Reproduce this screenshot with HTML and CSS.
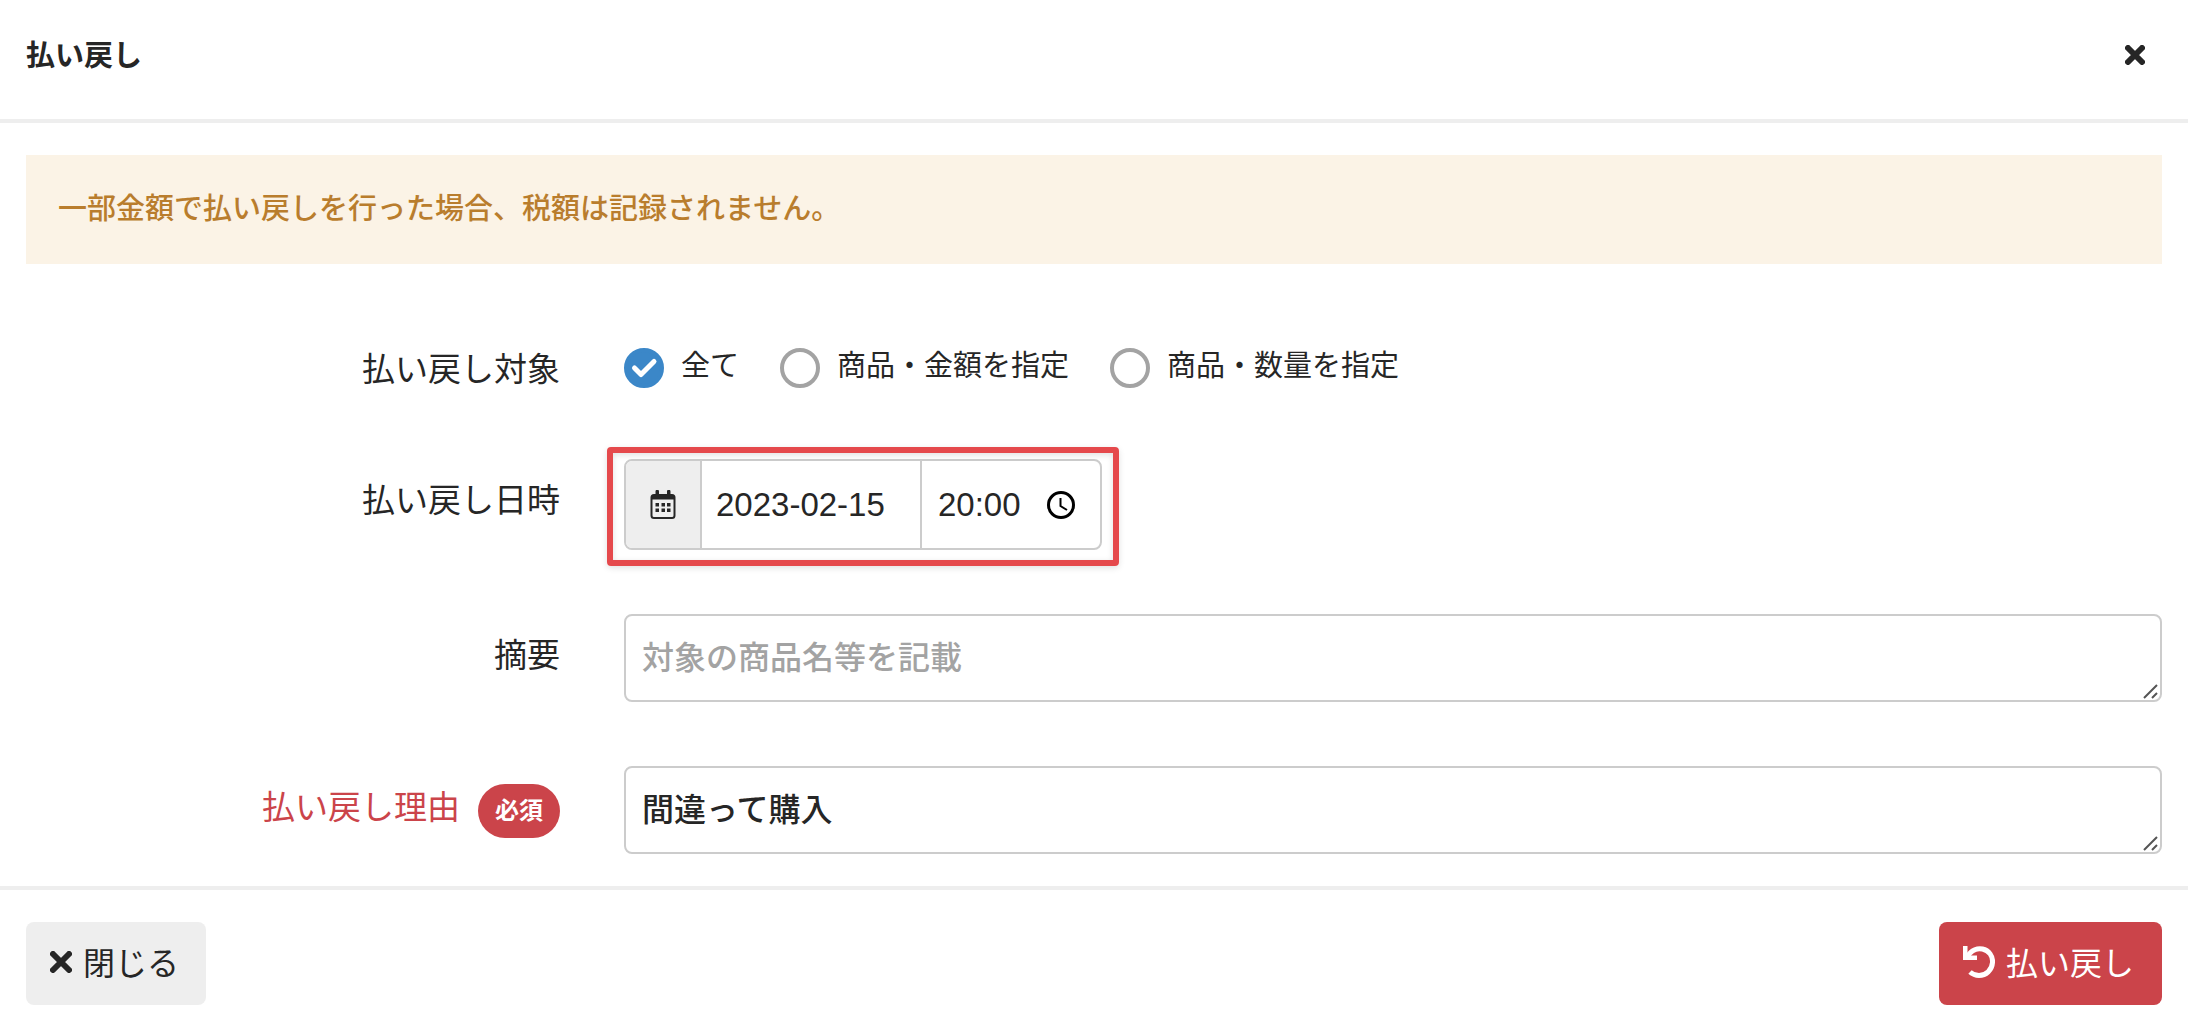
FILE: index.html
```
<!DOCTYPE html>
<html lang="ja">
<head>
  <meta charset="UTF-8" />
  <meta name="viewport" content="width=device-width, initial-scale=1.0"/>
  <title>払い戻し</title>
  <link rel="stylesheet" href="styles.css">
</head>
<body>
  <form class="modal" onsubmit="return false">
    <header class="modal-header">
      <h1>払い戻し</h1>
      <button type="button" class="close-icon" aria-label="閉じる">
        <svg width="20" height="20" viewBox="0 0 20 20"><path d="M3 3L17 17M17 3L3 17" /></svg>
      </button>
    </header>

    <main class="modal-body">
      <p class="alert">一部金額で払い戻しを行った場合、税額は記録されません。</p>

      <div class="form-row" role="radiogroup" aria-labelledby="target-label">
        <span class="form-label" id="target-label">払い戻し対象</span>
        <div class="radio-group">
          <label class="radio">
            <input type="radio" name="target" value="all" checked />
            <svg class="check" width="40" height="40" viewBox="0 0 40 40"><path d="M10.5 20L17 26.5L30 13.5" /></svg>
            <span>全て</span>
          </label>
          <label class="radio">
            <input type="radio" name="target" value="amount" />
            <svg class="check" width="40" height="40" viewBox="0 0 40 40"><path d="M10.5 20L17 26.5L30 13.5" /></svg>
            <span>商品・金額を指定</span>
          </label>
          <label class="radio">
            <input type="radio" name="target" value="quantity" />
            <svg class="check" width="40" height="40" viewBox="0 0 40 40"><path d="M10.5 20L17 26.5L30 13.5" /></svg>
            <span>商品・数量を指定</span>
          </label>
        </div>
      </div>

      <div class="form-row">
        <label class="form-label" for="date">払い戻し日時</label>
        <div class="datetime">
          <span class="addon">
            <svg width="26" height="30" viewBox="0 0 26 30">
              <path fill-rule="evenodd" d="M5.500 1.500a1.500 1.500 0 0 1 3.500 0V4h8V1.500a1.500 1.500 0 0 1 3.500 0V4H22a3.500 3.500 0 0 1 3.500 3.500v18A3.500 3.500 0 0 1 22 29H4A3.500 3.500 0 0 1 .5 25.500v-18A3.500 3.500 0 0 1 4 4h1.500zM2.500 9.500v16q0 1.500 1.500 1.500h18q1.500 0 1.500-1.500v-16z" />
              <path d="M5.500 13H9v3.500H5.500zm6 0H15v3.500h-3.500zm5.500 0h3.500v3.500H17zM5.500 18.500H9V22H5.500zm6 0H15V22h-3.500zm5.500 0h3.500V22H17z" />
            </svg>
          </span>
          <input type="text" id="date" class="date-input" value="2023-02-15" />
          <div class="time">
            <input type="text" class="time-input" value="20:00" aria-label="時刻" />
            <button type="button" class="clock" aria-label="時刻を選択">
              <svg width="28" height="28" viewBox="0 0 28 28">
                <circle cx="14" cy="14" r="12.500" />
                <path d="M13.500 7v8l6.500 4" />
              </svg>
            </button>
          </div>
        </div>
      </div>

      <div class="form-row">
        <label class="form-label" for="summary">摘要</label>
        <div class="field">
          <textarea id="summary" rows="1" placeholder="対象の商品名等を記載"></textarea>
          <svg class="grip" width="15" height="15" viewBox="0 0 15 15"><path d="M1 14L14 1M9 14L14 9" /></svg>
        </div>
      </div>

      <div class="form-row">
        <label class="form-label required" for="reason">払い戻し理由 <span class="badge">必須</span></label>
        <div class="field">
          <textarea id="reason" rows="1" required>間違って購入</textarea>
          <svg class="grip" width="15" height="15" viewBox="0 0 15 15"><path d="M1 14L14 1M9 14L14 9" /></svg>
        </div>
      </div>
    </main>

    <footer class="modal-footer">
      <button type="button" class="btn">
        <svg class="icon-cross" width="22" height="22" viewBox="0 0 22 22"><path d="M3 3L19 19M19 3L3 19" /></svg>
        <span>閉じる</span>
      </button>
      <button type="submit" class="btn btn-danger">
        <svg class="icon-undo" width="32" height="32" viewBox="0 0 32 32">
          <path class="arc" d="M4.500 10.500C8.500 3.500 15 2 19.500 3C26 4.500 30 10 29.500 16.500C29 24 23 29.500 16 29.500C12.500 29.500 9.500 28.300 7 26" />
          <path class="head" d="M0 0H4.500V9.500H14V14H0z" />
        </svg>
        <span>払い戻し</span>
      </button>
    </footer>
  </form>
</body>
</html>
```
FILE: styles.css
```
* {
  box-sizing: border-box;
}
body {
  margin: 0;
  background-color: #fff;
  color: #262626;
  font-family: "Liberation Sans", "Noto Sans CJK JP", sans-serif;
  font-size: 32px;
}
input, textarea, button {
  font: inherit;
  color: inherit;
  margin: 0;
}
button {
  border: none;
  cursor: pointer;
}
svg {
  display: block;
}
.modal {
  display: flex;
  flex-direction: column;
  min-height: 100vh;
}
.modal-header {
  display: flex;
  align-items: center;
  justify-content: space-between;
  padding: 35px 33px 42px 26px;
  border-bottom: 4px solid #eee;
}
.modal-header h1 {
  margin: 0;
  font-size: 29px;
  line-height: 42px;
}
.close-icon {
  padding: 9px 10px 11px;
  background: none;
}
.close-icon path, .icon-cross path {
  stroke: #262626;
  stroke-width: 6;
  stroke-linecap: round;
}
.modal-body {
  flex: 1;
  display: flex;
  flex-direction: column;
  gap: 64px;
  padding: 32px 26px;
}
.alert {
  margin: 0;
  padding: 32px;
  background-color: #fbf3e6;
  color: #b97d2d;
  font-size: 29px;
  font-weight: 500;
  line-height: 45px;
}
.form-row {
  display: grid;
  grid-template-columns: 25% 1fr;
  column-gap: 64px;
  align-items: start;
  min-height: 67px;
}
.form-label {
  padding-top: 17px;
  font-size: 33px;
  line-height: 49px;
  text-align: right;
}
.form-label.required {
  display: flex;
  justify-content: flex-end;
  gap: 18px;
  color: #cb444a;
}
.badge {
  padding: 0 17px;
  margin: 1px 0 -6px;
  border-radius: 27px;
  background-color: #cb444a;
  color: #fff;
  font-size: 24px;
  font-weight: bold;
  line-height: 54px;
}
.radio-group {
  display: flex;
  flex-wrap: wrap;
  gap: 41px;
  padding-top: 20px;
}
.radio {
  display: grid;
  grid-template-columns: 40px auto;
  column-gap: 17px;
  font-size: 29px;
  line-height: 36px;
  cursor: pointer;
}
.radio input {
  grid-area: 1 / 1;
  appearance: none;
  width: 40px;
  height: 40px;
  border: 4px solid #a3a3a3;
  border-radius: 50%;
}
.radio input:checked {
  border-color: #3b87c8;
  background-color: #3b87c8;
}
.radio .check {
  grid-area: 1 / 1;
  visibility: hidden;
  pointer-events: none;
}
.radio input:checked + .check {
  visibility: visible;
}
.check path {
  fill: none;
  stroke: #fff;
  stroke-width: 5;
  stroke-linecap: round;
  stroke-linejoin: round;
}
.datetime {
  position: relative;
  justify-self: start;
  display: flex;
  height: 91px;
  border: 2px solid #ccc;
  border-radius: 8px;
  font-size: 33px;
}
/* red frame round the date fields */
.datetime::after {
  content: "";
  position: absolute;
  inset: -14px -19px -18px;
  border: 6px solid #e5494c;
  border-radius: 4px;
  box-shadow: 0 2px 6px rgba(0,0,0,0.12), inset 0 2px 6px rgba(0,0,0,0.12);
  pointer-events: none;
}
.addon {
  display: flex;
  align-items: center;
  justify-content: center;
  width: 74px;
  border-radius: 6px 0 0 6px;
  background-color: #eee;
}
.addon path {
  fill: #262626;
}
.date-input {
  width: 222px;
  padding: 0 14px;
  border: solid #ccc;
  border-width: 0 2px;
  background: none;
}
.time {
  display: flex;
  align-items: center;
  width: 178px;
  padding-left: 16px;
}
.time-input {
  width: 93px;
  height: 87px;
  padding: 0;
  border: none;
  background: none;
}
.clock {
  margin-left: 16px;
  padding: 0;
  background: none;
}
.clock svg {
  fill: none;
  stroke: #000;
  stroke-width: 3;
}
.clock path {
  stroke-width: 2;
}
.field {
  position: relative;
}
textarea {
  display: block;
  width: 100%;
  height: 88px;
  padding: 16px;
  border: 2px solid #ccc;
  border-radius: 8px;
  font-weight: 500;
  line-height: 52px;
  resize: vertical;
  overflow: hidden;
}
textarea::placeholder {
  color: #a3a3a3;
}
textarea::-webkit-resizer {
  background: transparent;
}
.grip {
  position: absolute;
  right: 4px;
  bottom: 3px;
  pointer-events: none;
}
.grip path {
  stroke: #555;
  stroke-width: 2;
}
.modal-footer {
  display: flex;
  justify-content: space-between;
  padding: 32px 26px 27px;
  border-top: 4px solid #eee;
}
.btn {
  display: flex;
  align-items: center;
  gap: 11px;
  height: 83px;
  padding: 0 27px 3px 24px;
  border-radius: 8px;
  background-color: #eee;
}
.btn span {
  padding-bottom: 3px;
}
.btn-danger {
  padding-right: 28px;
  background-color: #cb444a;
  color: #fff;
}
.icon-undo .arc {
  fill: none;
  stroke: #fff;
  stroke-width: 5;
}
.icon-undo .head {
  fill: #fff;
}
```
